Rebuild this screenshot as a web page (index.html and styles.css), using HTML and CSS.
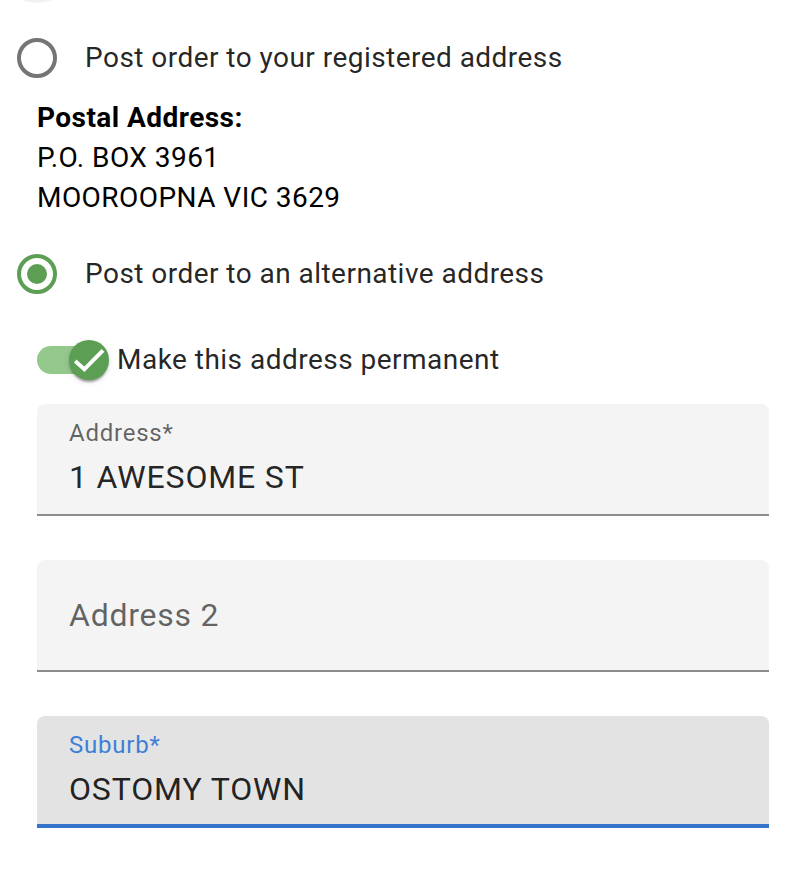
FILE: index.html
```html
<!DOCTYPE html>
<html lang="en">
<head>
<meta charset="utf-8">
<title>Delivery address</title>
<link rel="stylesheet" href="styles.css">
</head>
<body>
<div class="page">
  <span class="ripple"></span>
  <div class="form">
    <label class="radio-row">
      <span class="radio"></span>
      <span class="radio-text">Post order to your registered address</span>
    </label>

    <div class="postal">
      <div class="postal-title">Postal Address:</div>
      <div>P.O. BOX 3961</div>
      <div>MOOROOPNA VIC 3629</div>
    </div>

    <label class="radio-row radio-row-alt">
      <span class="radio radio-checked"><span class="radio-dot"></span></span>
      <span class="radio-text">Post order to an alternative address</span>
    </label>

    <label class="switch-row">
      <span class="switch">
        <span class="switch-track"></span>
        <span class="switch-thumb">
          <svg viewBox="0 0 40 40" width="40" height="40"><path d="M7.7 22.4 L15.3 29.3 L32.6 11.8" fill="none" stroke="#fff" stroke-width="4" stroke-linecap="square" stroke-linejoin="miter"/></svg>
        </span>
      </span>
      <span class="switch-text">Make this address permanent</span>
    </label>

    <div class="fields">
      <div class="field">
        <div class="field-label">Address*</div>
        <div class="field-value">1 AWESOME ST</div>
      </div>
      <div class="field field-empty">
        <div class="field-placeholder">Address 2</div>
      </div>
      <div class="field field-focused">
        <div class="field-label">Suburb*</div>
        <div class="field-value">OSTOMY TOWN</div>
      </div>
    </div>
  </div>
</div>
</body>
</html>
```

FILE: styles.css
```css
html, body {
  margin: 0;
  padding: 0;
  background: #ffffff;
}

body {
  font-family: Roboto, "Liberation Sans", Arial, sans-serif;
  color: rgba(0, 0, 0, 0.87);
}

.page {
  position: relative;
  width: 794px;
  height: 872px;
  overflow: hidden;
}

.ripple {
  position: absolute;
  left: -3px;
  top: -77px;
  width: 80px;
  height: 80px;
  border-radius: 50%;
  background: #f1f1f1;
}

.form {
  display: flex;
  flex-direction: column;
  padding: 38px 25px 0 37px;
}

.radio-row {
  display: flex;
  align-items: center;
  height: 40px;
  margin-left: -20px;
  gap: 28px;
}

.radio {
  box-sizing: border-box;
  width: 40px;
  height: 40px;
  border-radius: 50%;
  border: 4px solid #757575;
  display: flex;
  align-items: center;
  justify-content: center;
  flex: none;
}

.radio-checked {
  border-color: #5b9e54;
}

.radio-dot {
  width: 20px;
  height: 20px;
  border-radius: 50%;
  background: #5b9e54;
}

.radio-text {
  font-size: 28px;
  line-height: 40px;
  letter-spacing: 0.46px;
  color: rgba(0, 0, 0, 0.87);
}

.postal {
  margin-top: 20px;
  font-size: 28px;
  line-height: 40px;
  letter-spacing: 0.45px;
  color: #000;
}

.postal-title {
  font-weight: 700;
}

.radio-row-alt {
  margin-top: 36px;
}

.switch-row {
  display: flex;
  align-items: center;
  height: 40px;
  margin-top: 46px;
  gap: 8px;
}

.switch {
  position: relative;
  width: 72px;
  height: 40px;
  flex: none;
}

.switch-track {
  position: absolute;
  left: 0;
  top: 6px;
  width: 68px;
  height: 28px;
  border-radius: 14px;
  background: #94c88d;
}

.switch-thumb {
  position: absolute;
  right: 0;
  top: 0;
  width: 40px;
  height: 40px;
  border-radius: 50%;
  background: #5b9e54;
  box-shadow: 0 4px 2px -2px rgba(0, 0, 0, 0.2), 0 2px 2px 0 rgba(0, 0, 0, 0.14), 0 2px 6px 0 rgba(0, 0, 0, 0.12);
}

.switch-thumb svg {
  display: block;
}

.switch-text {
  font-size: 28px;
  line-height: 40px;
  letter-spacing: 0.48px;
}

.fields {
  display: flex;
  flex-direction: column;
  gap: 44px;
  margin-top: 24px;
}

.field {
  box-sizing: border-box;
  height: 112px;
  background: #f4f4f4;
  border-radius: 8px 8px 0 0;
  border-bottom: 2px solid #8c8c8c;
  padding: 17px 32px 0 32px;
}

.field-label {
  font-size: 24px;
  line-height: 24px;
  letter-spacing: 0.77px;
  color: rgba(0, 0, 0, 0.6);
}

.field-value {
  margin-top: 12px;
  font-size: 32px;
  line-height: 40px;
  letter-spacing: 0.85px;
  color: rgba(0, 0, 0, 0.87);
}

.field-empty {
  display: flex;
  align-items: center;
  padding-top: 0;
}

.field-placeholder {
  font-size: 32px;
  line-height: 40px;
  letter-spacing: 0.75px;
  color: rgba(0, 0, 0, 0.6);
}

.field-focused {
  background: #e3e3e3;
  border-bottom: 4px solid #3674cc;
}

.field-focused .field-label {
  color: #3f7fd8;
}
```
